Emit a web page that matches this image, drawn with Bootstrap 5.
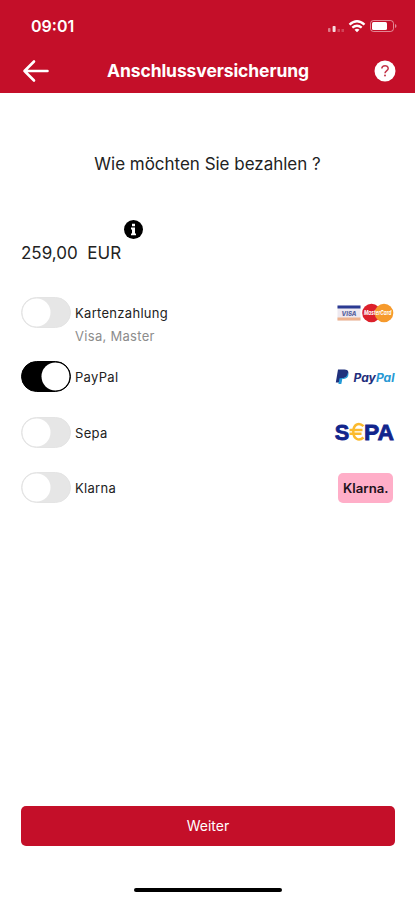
<!DOCTYPE html>
<html lang="de">
<head>
<meta charset="utf-8">
<meta name="viewport" content="width=device-width, initial-scale=1">
<title>Anschlussversicherung</title>
<link href="https://cdn.jsdelivr.net/npm/bootstrap@5.3.0/dist/css/bootstrap.min.css" rel="stylesheet">
<style>
body { font-family: Inter, "Liberation Sans", sans-serif; color: #222; background: #fff; }
svg { display: block; overflow: visible; }
.screen { height: 900px; overflow: hidden; }
.app-header { background: #c40f29; height: 92.5px; color: #fff; }
.status { height: 50px; padding: 1px 17px 0 31px; }
.clock { font-size: 16px; font-weight: 600; line-height: 20px; letter-spacing: 0; }
.title-bar { height: 42px; padding: 0 19px 0 22px; }
.page-title { font-size: 17.5px; font-weight: 700; line-height: 24px; letter-spacing: -.1px; }
.question { font-size: 17px; line-height: 24px; margin-top: 59px; letter-spacing: -.02px; }
.amount { font-size: 17px; line-height: 24px; padding-left: 21px; margin-top: 43px; height: 46px; }
.amount .info { margin: 1px 0 0 3px; }
.methods { padding: 0 20px 0 21px; margin-top: 32.5px; gap: 24.5px; }
.method { gap: 4px; }
.method-name { font-size: 13px; line-height: 31px; letter-spacing: .3px; padding-top: 1px; margin-bottom: -1px; }
.method-note { font-size: 13px; line-height: 16px; letter-spacing: .3px; color: #8c8c8c; padding-left: 54px; margin-bottom: -7.5px; }
.form-switch .switch.form-check-input { width: 50px; height: 31px; margin: 0; float: none; border: 1px solid #e4e4e4; background-color: #e6e6e6; background-size: 29px 29px; background-position: 0 center;
  background-image: url("data:image/svg+xml,%3csvg xmlns='http://www.w3.org/2000/svg' viewBox='0 0 29 29'%3e%3ccircle cx='14.5' cy='14.5' r='14' fill='%23fff'/%3e%3c/svg%3e"); }
.form-switch .switch.form-check-input:checked { background-color: #000; border-color: #000; background-position: right center; }
.next-btn, .next-btn:hover { height: 40px; margin: 0 20px 0 21px; background: #c40f29; color: #fff; border-radius: 5px; font-size: 14px; line-height: 20px; border: 0; padding: 0; }
.home-bar { width: 148px; height: 4.5px; border-radius: 3px; background: #000; margin: 41.5px auto 8px; }
</style>
<script src="https://cdn.jsdelivr.net/npm/bootstrap@5.3.0/dist/js/bootstrap.bundle.min.js"></script>
</head>
<body>
<div class="screen d-flex flex-column">
  <header class="app-header">
    <div class="status d-flex align-items-center justify-content-between">
      <span class="clock">09:01</span>
      <svg width="72" height="16" viewBox="0 0 72 16" aria-hidden="true">
        <g fill="#fff"><rect x="2" y="10" width="2.5" height="4" rx=".8" opacity=".45"/><rect x="6.6" y="8" width="3" height="6" rx=".8" opacity=".85"/><rect x="11.5" y="11" width="2.5" height="3" opacity=".22"/><rect x="15.5" y="11" width="2.5" height="3" opacity=".22"/></g>
        <g fill="none" stroke="#fff" stroke-width="2.3"><path d="M23.500 6.600Q31 -.2 38.500 6.600"/><path d="M26.300 9.700Q31 5.700 35.700 9.700"/></g>
        <path d="M28.500 11.700Q31 9.800 33.500 11.700L31 14.300Z" fill="#fff"/>
        <rect x="44.500" y="2.500" width="23" height="11" rx="3" fill="none" stroke="#fff" stroke-opacity=".5"/>
        <rect x="46" y="4" width="15" height="8" rx="1.500" fill="#fff"/><path d="M69 6v4c2-.7 2-3.3 0-4" fill="#fff" opacity=".5"/>
      </svg>
    </div>
    <div class="title-bar d-flex align-items-center">
      <svg width="28" height="24" viewBox="0 0 28 24" fill="none" stroke="#fff" stroke-width="2.6" stroke-linecap="round" stroke-linejoin="round"><path d="M25.500 12H2.500M12 2.500 2.500 12l9.500 9.500"/></svg>
      <h1 class="page-title mb-0 mx-auto pe-2">Anschlussversicherung</h1>
      <svg width="22" height="22" viewBox="0 0 22 22"><circle cx="11" cy="11" r="10.5" fill="#fff"/><path d="M7.800 8.500C8 4.700 14.200 4.700 14.200 8.400c0 2.400-3.200 2.400-3.200 4.800" fill="none" stroke="#c4354a" stroke-width="1.5"/><circle cx="11" cy="15.6" r="1" fill="#c4354a"/></svg>
    </div>
  </header>
  <main class="d-flex flex-column flex-grow-1">
    <p class="question text-center mb-0">Wie möchten Sie bezahlen ?</p>
    <div class="amount d-flex align-items-end"><span>259,00&nbsp; EUR</span>
      <svg class="info mb-auto" width="19" height="19" viewBox="0 0 19 19"><circle cx="9.5" cy="9.5" r="9.5" fill="#000"/><path d="M8 3.800h3v2.400H8zM7 7.600h4v5.800h1v1.800H7v-1.800h1V9.400H7z" fill="#fff"/></svg>
    </div>
    <div class="methods d-flex flex-column">
      <div>
        <div class="method form-switch d-flex align-items-center p-0">
          <input class="form-check-input switch" type="checkbox" role="switch" id="card-pay">
          <label class="method-name me-auto" for="card-pay">Kartenzahlung</label>
          <svg width="58" height="20" viewBox="0 0 58 20">
            <rect x=".5" y="2.500" width="23" height="15" fill="#eee9f0"/><path d="M.5 2.500h23v3H.5z" fill="#2b3a92"/><path d="M.5 14.500h23v3H.5z" fill="#efb38f"/>
            <text x="4.5" y="12.6" font-size="6.5" font-weight="800" font-style="italic" textLength="15" lengthAdjust="spacingAndGlyphs" fill="#59649f">VISA</text>
            <circle cx="34.5" cy="10" r="9.3" fill="#dc202b"/><circle cx="47" cy="10" r="9.3" fill="#f69a2c"/>
            <text x="27" y="12.3" font-size="6.5" font-weight="700" font-style="italic" textLength="27.5" lengthAdjust="spacingAndGlyphs" fill="#fff">MasterCard</text>
          </svg>
        </div>
        <div class="method-note">Visa, Master</div>
      </div>
      <div class="method form-switch d-flex align-items-center p-0">
        <input class="form-check-input switch" type="checkbox" role="switch" id="paypal" checked>
        <label class="method-name me-auto" for="paypal">PayPal</label>
        <svg width="60" height="20" viewBox="0 0 60 20">
          <path d="M3 2.500h6.500c4 0 4.500 3 3.400 5.500-1 2.500-3 3.200-6 3.200L6 15.500H.8z" fill="#20307c"/>
          <path d="M12.800 5.800c1.600 2.600-.3 6.200-4.300 6.200H7.300l-1 5H3.400l1.200-5.800h2.500c3.500 0 5.300-2 5.700-5.400z" fill="#239bd7"/>
          <text x="18.5" y="14.5" font-size="11.5" font-weight="700" font-style="italic" textLength="41" lengthAdjust="spacingAndGlyphs" fill="#222d7b">Pay<tspan fill="#2799d4">Pal</tspan></text>
        </svg>
      </div>
      <div class="method form-switch d-flex align-items-center p-0">
        <input class="form-check-input switch" type="checkbox" role="switch" id="sepa">
        <label class="method-name me-auto" for="sepa">Sepa</label>
        <svg width="61" height="26" viewBox="0 -2 61 26" font-family="Liberation Sans, sans-serif" font-weight="700" stroke-width=".8">
          <text x=".7" y="18.5" font-size="22" textLength="14.5" lengthAdjust="spacingAndGlyphs" fill="#12258c" stroke="#12258c">S</text>
          <text x="30" y="18.5" font-size="22" textLength="30" lengthAdjust="spacingAndGlyphs" fill="#12258c" stroke="#12258c">PA</text>
          <path d="M29.500 5.200C24.500 .5 19.300 4 19.300 10.700S24.500 21 29.500 16.500M15.500 9h13M15.500 12.800h12" fill="none" stroke="#fbba2e" stroke-width="2.5"/>
        </svg>
      </div>
      <div class="method form-switch d-flex align-items-center p-0">
        <input class="form-check-input switch" type="checkbox" role="switch" id="klarna">
        <label class="method-name me-auto" for="klarna">Klarna</label>
        <svg width="57" height="30" viewBox="0 0 57 30"><rect width="55" height="30" rx="5" fill="#ffaec8"/><text x="5" y="19.5" font-size="12.5" font-weight="600" textLength="45.5" lengthAdjust="spacingAndGlyphs" fill="#21101a">Klarna.</text></svg>
      </div>
    </div>
    <button class="btn next-btn mt-auto" type="button">Weiter</button>
    <div class="home-bar"></div>
  </main>
</div>
</body>
</html>
